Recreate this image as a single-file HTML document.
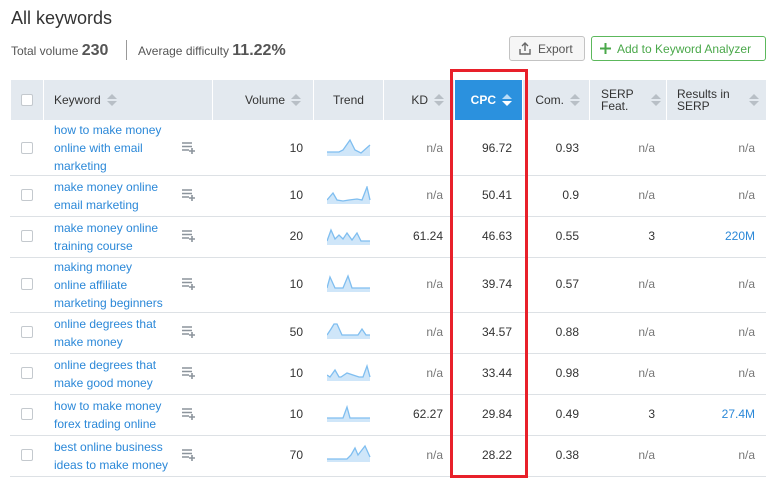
<!DOCTYPE html>
<html><head><meta charset="utf-8"><style>
*{box-sizing:border-box;margin:0;padding:0}
body{width:780px;height:481px;background:#fff;font-family:"Liberation Sans",sans-serif;color:#333;position:relative;overflow:hidden}
.a{position:absolute}
h1{position:absolute;left:11px;top:8px;font-size:18px;font-weight:normal;color:#333}
.th{position:absolute;top:80px;height:40px;background:#e3e9ef;font-size:12px;color:#333;display:flex;align-items:center}
.sort{display:inline-block;width:10px;height:14px;position:relative;margin-left:6px;vertical-align:middle}
.sort:before{content:"";position:absolute;left:0;top:1px;border:5px solid transparent;border-bottom:5px solid #b8bfc6;border-top:0}
.sort:after{content:"";position:absolute;left:0;top:8px;border:5px solid transparent;border-top:5px solid #b8bfc6;border-bottom:0}
.sw:before{border-bottom-color:#b9dcf7}.sw:after{border-top-color:#fff}
.cb{position:absolute;width:12px;height:12px;border:1px solid #c4c9ce;border-radius:2px;background:#fff}
.line{position:absolute;left:10px;width:756px;height:1px;background:#dde1e5}
.kw{position:absolute;left:54px;font-size:12px;line-height:18px;color:#2b88d8}
.n{position:absolute;font-size:12px;text-align:right;width:60px}
.g{color:#777}
.ic{position:absolute;left:182px}
</style></head><body>
<h1>All keywords</h1>
<div class="a" style="left:11px;top:42px;font-size:12px;color:#555">Total volume <b style="font-size:16px;color:#555">230</b></div>
<div class="a" style="left:126px;top:40px;width:1px;height:20px;background:#999"></div>
<div class="a" style="left:138px;top:42px;font-size:12px;color:#555">Average difficulty <b style="font-size:16px;color:#555">11.22%</b></div>
<div class="a" style="left:509px;top:36px;width:76px;height:25px;border:1px solid #c3c3c3;border-radius:3px;background:#f6f6f6;font-size:12px;color:#555;padding:5px 0 0 28px">Export
<svg class="a" style="left:9px;top:5px" width="12" height="13" viewBox="0 0 12 13"><path d="M6 1v8M3 4l3-3 3 3M1 7v5h10V7" fill="none" stroke="#666" stroke-width="1.4"/></svg></div>
<div class="a" style="left:591px;top:36px;width:175px;height:25px;border:1px solid #5cb85c;border-radius:3px;background:#fff;font-size:12px;color:#4aa84a;padding:5px 0 0 25px">Add to Keyword Analyzer
<svg class="a" style="left:8px;top:6px" width="11" height="11"><path d="M5.5 0v11M0 5.5h11" stroke="#4aa84a" stroke-width="2"/></svg></div>

<div class="th" style="left:11px;width:32px"><div class="cb" style="left:10px;top:14px"></div></div>
<div class="th" style="left:44px;width:168px;padding-left:10px">Keyword<span class="sort"></span></div>
<div class="th" style="left:213px;width:100px;justify-content:flex-end;padding-right:12px">Volume<span class="sort"></span></div>
<div class="th" style="left:314px;width:69px;justify-content:center">Trend</div>
<div class="th" style="left:384px;width:70px;justify-content:flex-end;padding-right:10px">KD<span class="sort"></span></div>
<div class="th" style="left:455px;width:67px;background:#2b91de;color:#fff;justify-content:flex-end;padding-right:10px;font-weight:bold">CPC<span class="sort sw"></span></div>
<div class="th" style="left:523px;width:66px;justify-content:flex-end;padding-right:9px">Com.<span class="sort"></span></div>
<div class="th" style="left:590px;width:76px;padding-left:11px;line-height:12px">SERP<br>Feat.<span class="sort" style="position:absolute;left:55px;top:13px"></span></div>
<div class="th" style="left:667px;width:99px;padding-left:10px;line-height:12px">Results in<br>SERP<span class="sort" style="position:absolute;left:76px;top:13px"></span></div>

<div class="line" style="top:175px"></div><div class="line" style="top:216px"></div><div class="line" style="top:257px"></div><div class="line" style="top:312px"></div><div class="line" style="top:353px"></div><div class="line" style="top:394px"></div><div class="line" style="top:435px"></div><div class="line" style="top:476px"></div>

<svg width="0" height="0" style="position:absolute"><defs><g id="ic"><path d="M0 1h10M0 4.5h10M0 8h7M10 6v6M7 9h6" stroke="#8c949c" stroke-width="1.6" fill="none"/></g></defs></svg>

<div class="cb" style="left:21px;top:142px"></div>
<div class="kw" style="top:121px">how to make money<br>online with email<br>marketing</div>
<svg class="ic" style="top:142px" width="14" height="13"><use href="#ic"/></svg>
<div class="n" style="left:243px;top:141px">10</div>
<svg class="a" style="left:327px;top:138px" width="44" height="18"><path d="M0 14 12 14 16 12 23 2 28 12 34 15 43 7V18H0Z" fill="#cfe6f9" stroke="none"/><polyline points="0,14 12,14 16,12 23,2 28,12 34,15 43,7" fill="none" stroke="#7fbef0" stroke-width="1.3"/></svg>
<div class="n g" style="left:383px;top:141px">n/a</div>
<div class="n" style="left:452px;top:141px">96.72</div>
<div class="n" style="left:519px;top:141px">0.93</div>
<div class="n g" style="left:595px;top:141px">n/a</div>
<div class="n g" style="left:695px;top:141px">n/a</div>

<div class="cb" style="left:21px;top:189px"></div>
<div class="kw" style="top:178px">make money online<br>email marketing</div>
<svg class="ic" style="top:189px" width="14" height="13"><use href="#ic"/></svg>
<div class="n" style="left:243px;top:188px">10</div>
<svg class="a" style="left:327px;top:186px" width="44" height="18"><path d="M0 14 6 7 10 14 16 15 22 14 30 13 35 14 40 1 43 14V18H0Z" fill="#cfe6f9"/><polyline points="0,14 6,7 10,14 16,15 22,14 30,13 35,14 40,1 43,14" fill="none" stroke="#7fbef0" stroke-width="1.3"/></svg>
<div class="n g" style="left:383px;top:188px">n/a</div>
<div class="n" style="left:452px;top:188px">50.41</div>
<div class="n" style="left:519px;top:188px">0.9</div>
<div class="n g" style="left:595px;top:188px">n/a</div>
<div class="n g" style="left:695px;top:188px">n/a</div>

<div class="cb" style="left:21px;top:230px"></div>
<div class="kw" style="top:219px">make money online<br>training course</div>
<svg class="ic" style="top:230px" width="14" height="13"><use href="#ic"/></svg>
<div class="n" style="left:243px;top:229px">20</div>
<svg class="a" style="left:327px;top:227px" width="44" height="18"><path d="M0 14 4 3 8 12 12 8 16 12 20 6 25 13 30 6 34 14 43 14V18H0Z" fill="#cfe6f9"/><polyline points="0,14 4,3 8,12 12,8 16,12 20,6 25,13 30,6 34,14 43,14" fill="none" stroke="#7fbef0" stroke-width="1.3"/></svg>
<div class="n" style="left:383px;top:229px">61.24</div>
<div class="n" style="left:452px;top:229px">46.63</div>
<div class="n" style="left:519px;top:229px">0.55</div>
<div class="n" style="left:595px;top:229px">3</div>
<div class="n" style="left:695px;top:229px;color:#2b88d8">220M</div>

<div class="cb" style="left:21px;top:278px"></div>
<div class="kw" style="top:258px">making money<br>online affiliate<br>marketing beginners</div>
<svg class="ic" style="top:278px" width="14" height="13"><use href="#ic"/></svg>
<div class="n" style="left:243px;top:277px">10</div>
<svg class="a" style="left:327px;top:274px" width="44" height="18"><path d="M0 14 3 3 8 14 16 14 21 2 25 14 43 14V18H0Z" fill="#cfe6f9"/><polyline points="0,14 3,3 8,14 16,14 21,2 25,14 43,14" fill="none" stroke="#7fbef0" stroke-width="1.3"/></svg>
<div class="n g" style="left:383px;top:277px">n/a</div>
<div class="n" style="left:452px;top:277px">39.74</div>
<div class="n" style="left:519px;top:277px">0.57</div>
<div class="n g" style="left:595px;top:277px">n/a</div>
<div class="n g" style="left:695px;top:277px">n/a</div>

<div class="cb" style="left:21px;top:326px"></div>
<div class="kw" style="top:315px">online degrees that<br>make money</div>
<svg class="ic" style="top:326px" width="14" height="13"><use href="#ic"/></svg>
<div class="n" style="left:243px;top:325px">50</div>
<svg class="a" style="left:327px;top:321px" width="44" height="18"><path d="M0 14 4 8 7 3 10 3 15 14 31 14 35 8 39 14 43 14V18H0Z" fill="#cfe6f9"/><polyline points="0,14 4,8 7,3 10,3 15,14 31,14 35,8 39,14 43,14" fill="none" stroke="#7fbef0" stroke-width="1.3"/></svg>
<div class="n g" style="left:383px;top:325px">n/a</div>
<div class="n" style="left:452px;top:325px">34.57</div>
<div class="n" style="left:519px;top:325px">0.88</div>
<div class="n g" style="left:595px;top:325px">n/a</div>
<div class="n g" style="left:695px;top:325px">n/a</div>

<div class="cb" style="left:21px;top:367px"></div>
<div class="kw" style="top:356px">online degrees that<br>make good money</div>
<svg class="ic" style="top:367px" width="14" height="13"><use href="#ic"/></svg>
<div class="n" style="left:243px;top:366px">10</div>
<svg class="a" style="left:327px;top:363px" width="44" height="18"><path d="M0 12 3 14 8 7 12 14 14 14 20 10 26 12 32 14 36 14 40 3 43 14V18H0Z" fill="#cfe6f9"/><polyline points="0,12 3,14 8,7 12,14 14,14 20,10 26,12 32,14 36,14 40,3 43,14" fill="none" stroke="#7fbef0" stroke-width="1.3"/></svg>
<div class="n g" style="left:383px;top:366px">n/a</div>
<div class="n" style="left:452px;top:366px">33.44</div>
<div class="n" style="left:519px;top:366px">0.98</div>
<div class="n g" style="left:595px;top:366px">n/a</div>
<div class="n g" style="left:695px;top:366px">n/a</div>

<div class="cb" style="left:21px;top:408px"></div>
<div class="kw" style="top:397px">how to make money<br>forex trading online</div>
<svg class="ic" style="top:408px" width="14" height="13"><use href="#ic"/></svg>
<div class="n" style="left:243px;top:407px">10</div>
<svg class="a" style="left:327px;top:404px" width="44" height="18"><path d="M0 14 16 14 20 3 23 14 43 14V18H0Z" fill="#cfe6f9"/><polyline points="0,14 16,14 20,3 23,14 43,14" fill="none" stroke="#7fbef0" stroke-width="1.3"/></svg>
<div class="n" style="left:383px;top:407px">62.27</div>
<div class="n" style="left:452px;top:407px">29.84</div>
<div class="n" style="left:519px;top:407px">0.49</div>
<div class="n" style="left:595px;top:407px">3</div>
<div class="n" style="left:695px;top:407px;color:#2b88d8">27.4M</div>

<div class="cb" style="left:21px;top:449px"></div>
<div class="kw" style="top:438px">best online business<br>ideas to make money</div>
<svg class="ic" style="top:449px" width="14" height="13"><use href="#ic"/></svg>
<div class="n" style="left:243px;top:448px">70</div>
<svg class="a" style="left:327px;top:444px" width="44" height="18"><path d="M0 15 20 15 24 11 28 4 31 11 38 2 43 13V18H0Z" fill="#cfe6f9"/><polyline points="0,15 20,15 24,11 28,4 31,11 38,2 43,13" fill="none" stroke="#7fbef0" stroke-width="1.3"/></svg>
<div class="n g" style="left:383px;top:448px">n/a</div>
<div class="n" style="left:452px;top:448px">28.22</div>
<div class="n" style="left:519px;top:448px">0.38</div>
<div class="n g" style="left:595px;top:448px">n/a</div>
<div class="n g" style="left:695px;top:448px">n/a</div>

<div class="a" style="left:450px;top:69px;width:78px;height:409px;border:3px solid #e8202a"></div>
</body></html>
